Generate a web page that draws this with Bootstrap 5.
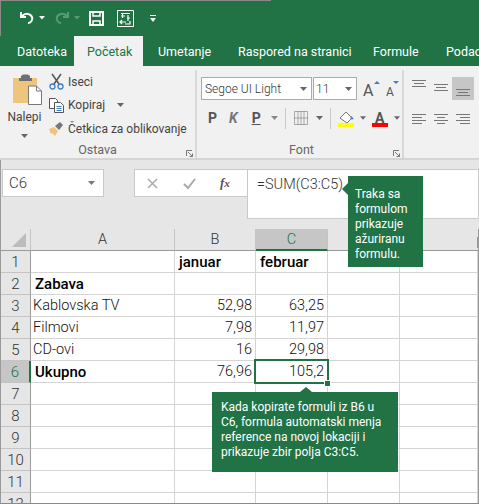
<!DOCTYPE html>
<html lang="sr">
<head>
<meta charset="utf-8">
<title>Excel</title>
<link href="https://cdn.jsdelivr.net/npm/bootstrap@5.3.0/dist/css/bootstrap.min.css" rel="stylesheet">
<style>
html,body{margin:0;height:504px;overflow:hidden;background:#e6e6e6}
body{font-family:Roboto,"Open Sans",sans-serif;color:#333}
.app{width:479px;height:504px;overflow:hidden}
.app svg{overflow:visible}
.titlebar{height:36px;background:linear-gradient(#8a8a8a,#8a8a8a) 0 0/270px 1px no-repeat,#217346;border-left:1px solid #8a8a8a;padding-left:18px}
.titlebar svg{display:block;flex:none}
.tabs{height:30px;background:#217346;font-size:12.5px;color:#fff}
.tabx{height:30px;padding-top:7px;white-space:nowrap;flex:none}
.tabx.on{background:#f1f1f1;color:#217346}
.ribbon{height:94px;background:#f1f1f1;border-bottom:2px solid #d4d4d4;font-size:12px;color:#444}
.grp{height:88px;margin-top:4px;border-right:2px solid #d8d8d8;position:relative;flex:none}
.grpbody{height:72px}
.grplabel{height:16px;line-height:16px;text-align:center;color:#666;font-size:12.5px}
.launch{position:absolute;right:2px;bottom:1px}
.pastecol{width:49px;padding-top:4px}
.pastecol svg:first-child{margin-left:5px}
.mini{height:23.5px;gap:4px;white-space:nowrap}
.selbox{height:23px;background:#fff;border:1px solid #ababab;font-size:12px;padding-left:3px;flex:none;font-weight:300;color:#333}
.alignc{width:22px;height:23px;flex:none}
.alignc.on{background:#c6c6c6}
.formula{height:69px;background:#e6e6e6;padding:9px 0 0 1px;border-left:1px solid #9a9a9a}
.namebox{width:102px;height:28px;background:#fff;border:1px solid #c9c9c9;padding-left:6px;font-size:15px;font-weight:300}
.fxbox{width:113px;height:28px;background:#fff;border:1px solid #c9c9c9;margin-left:30px;border-right:0}
.fbar{flex:1;height:50px;background:#fff;border:1px solid #c9c9c9;padding:4px 0 0 9px;font-size:14.5px;font-weight:300}
.sheet{display:grid;grid-template-columns:30px 144px 81px 72px 72px 78px;grid-auto-rows:22px;background:#fff;height:275px;overflow:hidden;border-left:1px solid #9a9a9a;border-right:1px solid #9a9a9a;border-bottom:1px solid #8a8a8a;font-size:14.5px;font-weight:300;color:#111}
.cell{border-right:1px solid #d4d4d4;border-bottom:1px solid #d4d4d4;padding:0 3px 0 2px;line-height:22px;white-space:nowrap;overflow:hidden}
.num{text-align:right}
.bd{font-weight:500;color:#000;font-size:15px;padding-left:4px}
.hd{background:#e6e6e6;border-right:1px solid #c4c4c4;border-bottom:1px solid #9a9a9a;text-align:center;color:#333;padding:0;position:relative}
.rh{border-right:1px solid #9a9a9a;border-bottom:1px solid #c4c4c4;font-size:15px}
.hd.act{background:#c6c6c6;color:#217346}
.colact{border-bottom:2px solid #217346}
.rowact{border-right:2px solid #217346}
.hdnone{border-right:0}
.sliver{position:absolute;right:0;top:8px;width:1px;height:11px;background:#c98a5a}
.selcell{position:absolute;left:254px;top:359px;width:75px;height:25px;border:2px solid #217346}
.handle{position:absolute;left:325px;top:381px;width:5px;height:5px;background:#217346;outline:1px solid #fff}
.note{position:absolute;background:#217346;color:#fff;font-size:12px;line-height:15px}
.note::before{content:"";position:absolute;width:0;height:0;border:6px solid transparent}
.note1{left:348px;top:176px;width:75px;height:91px;padding:11px 0 0 7px}
.note1::before{left:-6px;top:7px;border-left:0;border-right-color:#217346}
.note2{left:212px;top:392px;width:186px;height:80px;padding:8px 0 0 9px}
.note2::before{left:88px;top:-5px;border-top:0;border-bottom-width:5px;border-bottom-color:#217346}
</style>
</head>
<body>
<div class="app position-relative">
  <div class="titlebar d-flex align-items-center">
    <svg width="16" height="15" viewBox="0 0 16 15" fill="none" stroke="#fff" stroke-width="2"><path d="M2 1v5h5M2.600 5.500C5 3 8 2 10.500 3.500c3 1.500 3.500 4.500 2 6.500-1 1.500-2 2-3.500 2.300"/></svg>
    <svg style="margin-left:4px" width="6" height="4" viewBox="0 0 6 4" fill="#fff"><path d="M0 0h6L3 3.500z"/></svg>
    <svg style="margin-left:9px" width="16" height="15" viewBox="0 0 16 15" fill="none" stroke="#5b9a78" stroke-width="2"><path d="M14 1v5H9M13.400 5.500C11 3 8 2 5.500 3.500c-3 1.500-3.500 4.500-2 6.500 1 1.500 2 2 3.500 2.300"/></svg>
    <svg style="margin-left:4px" width="6" height="4" viewBox="0 0 6 4" fill="#5b9a78"><path d="M0 0h6L3 3.500z"/></svg>
    <svg style="margin-left:9px" width="15" height="15" viewBox="0 0 15 15" fill="none" stroke="#fff" stroke-width="2"><path d="M1 1h13v13H1z"/><path d="M4 1v4h7V1M4 14v-4h7v4" stroke-width="1.500"/></svg>
    <svg style="margin-left:13px" width="17" height="17" viewBox="0 0 17 17" fill="none" stroke="#fff"><path d="M.5.500h16v16H.5z"/><path d="M4 3.500h9M5.500 3v5M4 6h4M11 5v6M13 8H10M3 12h6M5 10l-2 2 2 2M13 11v3H8" stroke-width="1.200"/></svg>
    <svg style="margin-left:16px" width="6" height="7" viewBox="0 0 6 7" fill="#fff"><path d="M0 0h6v1H0zM0 3h6L3 7z"/></svg>
  </div>
  <div class="tabs d-flex">
    <div class="tabx" style="width:74px;padding-left:17px">Datoteka</div>
    <div class="tabx on" style="width:69px;padding-left:13px">Početak</div>
    <div class="tabx" style="width:95px;padding-left:15px">Umetanje</div>
    <div class="tabx" style="width:135px">Raspored na stranici</div>
    <div class="tabx" style="width:73px">Formule</div>
    <div class="tabx">Podaci</div>
  </div>
  <div class="ribbon d-flex">
    <div class="grp d-flex flex-column" style="width:197px">
      <div class="grpbody d-flex">
        <div class="pastecol d-flex flex-column align-items-center">
          <svg width="29" height="31" viewBox="0 -1 29 31"><path d="M0 3h24v25H0z" fill="#eec57d"/><path d="M8 3V0.500h1l1-1h5l1 1h1V3h2v3H6V3z" fill="#6f6f6f"/><path d="M15.500 11h8l5 5v13.500h-13z" fill="#fff" stroke="#777"/><path d="M23.500 11v5h5" fill="none" stroke="#777"/></svg>
          <div style="margin-top:3px">Nalepi</div>
          <svg class="mt-2" width="7" height="4" viewBox="0 0 7 4" fill="#666"><path d="M0 0h7L3.500 4z"/></svg>
        </div>
        <div class="d-flex flex-column">
          <div class="mini d-flex align-items-center">
            <svg width="15" height="16" viewBox="0 0 15 16" fill="none"><path d="M3 0l7 10M12 0L5 10" stroke="#555" stroke-width="1.500"/><circle cx="3.500" cy="12.500" r="2.500" stroke="#3f7fc1" stroke-width="1.300"/><circle cx="11.500" cy="12.500" r="2.500" stroke="#3f7fc1" stroke-width="1.300"/></svg>Iseci
          </div>
          <div class="mini d-flex align-items-center">
            <svg width="15" height="15" viewBox="0 0 15 15" fill="#fff" stroke="#555"><path d="M.5.500h6l2 2v8h-8z"/><path d="M5.500 4.500h6l3 3v7h-9z"/><path d="M7.500 8.500h5M7.500 10.500h5M7.500 12.500h5" stroke="#3f7fc1"/></svg>Kopiraj
            <svg class="ms-2" width="7" height="4" viewBox="0 0 7 4" fill="#666"><path d="M0 0h7L3.500 4z"/></svg>
          </div>
          <div class="mini d-flex align-items-center">
            <svg width="15" height="15" viewBox="0 0 15 15"><path d="M0 8l5-2 4 4-3 5-3-3-1 1-1-2z" fill="#eec57d"/><path d="M6 5l5-4 3 3-4 5z" fill="#777"/></svg>Četkica za oblikovanje
          </div>
        </div>
      </div>
      <div class="grplabel">Ostava</div>
      <svg class="launch" width="7" height="7" viewBox="0 0 7 7" fill="none" stroke="#777"><path d="M.5 6V.500H6M2 2l4.500 4.500M6.500 3.500v3h-3"/></svg>
    </div>
    <div class="grp d-flex flex-column" style="width:207px;padding-left:4px">
      <div class="grpbody">
        <div class="d-flex align-items-center" style="margin-top:7px">
          <div class="selbox d-flex align-items-center justify-content-between" style="width:111px">Segoe UI Light<svg class="me-1" width="7" height="4" viewBox="0 0 7 4" fill="#666"><path d="M0 0h7L3.500 4z"/></svg></div>
          <div class="selbox d-flex align-items-center justify-content-between" style="width:44px;margin-left:1px;padding-left:2px">11<svg class="me-1" width="7" height="4" viewBox="0 0 7 4" fill="#666"><path d="M0 0h7L3.500 4z"/></svg></div>
          <svg style="margin-left:5px" width="19" height="18" viewBox="0 0 19 18"><text x="1" y="16" font-family="Roboto" font-size="16" fill="#555">A</text><path d="M12 4h6l-3-3z" fill="#3f7fc1"/></svg>
          <svg style="margin-left:3px" width="20" height="18" viewBox="0 0 20 18"><text x="2" y="16" font-family="Roboto" font-size="12" fill="#555">A</text><path d="M9 1h6l-3 3z" fill="#3f7fc1"/></svg>
        </div>
        <div class="d-flex align-items-center" style="margin-top:5px;height:26px">
          <span class="fw-bold" style="margin-left:7px;font-size:14px;color:#555">P</span>
          <span class="fw-bold fst-italic" style="margin-left:12px;font-size:14px;color:#777">K</span>
          <span class="fw-bold text-decoration-underline" style="margin-left:14px;font-size:14px;color:#555">P</span>
          <svg style="margin-left:10px" width="7" height="4" viewBox="0 0 7 4" fill="#888"><path d="M0 0h7L3.500 4z"/></svg>
          <span style="width:1px;height:21px;background:#c8c8c8;margin:0 8px 0 7px"></span>
          <svg width="14" height="14" viewBox="0 0 14 14" fill="none" stroke="#666" stroke-dasharray="1 1"><path d="M.5.500h13v13H.5zM.5 7h13M7 .5v13M4 .5v13M10 .5v13"/></svg>
          <svg class="ms-2" width="7" height="4" viewBox="0 0 7 4" fill="#666"><path d="M0 0h7L3.500 4z"/></svg>
          <span style="width:1px;height:21px;background:#c8c8c8;margin:0 7px"></span>
          <svg width="16" height="17" viewBox="0 0 16 17"><path d="M2 8l6-6 6 6-5 5z" fill="#fff" stroke="#777"/><path d="M13 6c1 1 2.500 2 2.500 3-2 1-3 0-3-1z" fill="#3f7fc1"/><path d="M0 13h16v4H0z" fill="#ff0"/></svg>
          <svg style="margin-left:6px" width="6" height="4" viewBox="0 0 7 4" fill="#666"><path d="M0 0h7L3.500 4z"/></svg>
          <svg style="margin-left:6px" width="16" height="17" viewBox="0 0 16 17"><text x="3" y="12.500" font-family="Roboto" font-weight="700" font-size="14" fill="#555">A</text><path d="M0 13h16v4H0z" fill="#f00"/></svg>
          <svg style="margin-left:6px" width="6" height="4" viewBox="0 0 7 4" fill="#666"><path d="M0 0h7L3.500 4z"/></svg>
        </div>
      </div>
      <div class="grplabel">Font</div>
      <svg class="launch" width="7" height="7" viewBox="0 0 7 7" fill="none" stroke="#777"><path d="M.5 6V.500H6M2 2l4.500 4.500M6.500 3.500v3h-3"/></svg>
    </div>
    <div class="flex-fill d-flex flex-column" style="padding:7px 0 0 4px;margin-top:4px">
      <div class="d-flex">
        <div class="alignc"><svg width="22" height="23" fill="none" stroke="#777"><path d="M4 3.500h14M6 6.500h10M4 9.500h14" stroke-width="1.200"/></svg></div>
        <div class="alignc"><svg width="22" height="23" fill="none" stroke="#777"><path d="M4 7.500h14M6 10.500h10M4 13.500h14" stroke-width="1.200"/></svg></div>
        <div class="alignc on"><svg width="22" height="23" fill="none" stroke="#777"><path d="M4 12.500h14M6 15.500h10M4 18.500h14" stroke-width="1.200"/></svg></div>
      </div>
      <div class="d-flex" style="margin-top:9px">
        <div class="alignc"><svg width="22" height="23" fill="none" stroke="#777"><path d="M4 5.500h14M4 8.500h10M4 11.500h14M4 14.500h10" stroke-width="1.200"/></svg></div>
        <div class="alignc"><svg width="22" height="23" fill="none" stroke="#777"><path d="M4 5.500h14M7 8.500h8M4 11.500h14M7 14.500h8" stroke-width="1.200"/></svg></div>
        <div class="alignc"><svg width="22" height="23" fill="none" stroke="#777"><path d="M4 5.500h14M8 8.500h10M4 11.500h14M8 14.500h10" stroke-width="1.200"/></svg></div>
      </div>
    </div>
  </div>
  <div class="formula d-flex align-items-start">
    <div class="namebox d-flex align-items-center justify-content-between">C6<svg class="me-2" width="7" height="4" viewBox="0 0 7 4" fill="#777"><path d="M0 0h7L3.500 4z"/></svg></div>
    <div class="fxbox d-flex align-items-center">
      <svg style="margin-left:12px" width="12" height="11" viewBox="0 0 12 11" fill="none" stroke="#aaa" stroke-width="1.500"><path d="M1 1l9 9M10 1l-9 9"/></svg>
      <svg style="margin-left:24px" width="13" height="11" viewBox="0 0 13 11" fill="none" stroke="#aaa" stroke-width="2"><path d="M1 6l4 4 7-9"/></svg>
      <span class="fst-italic fw-bold" style="margin-left:24px;font-family:'Liberation Serif',serif;font-size:13px;color:#555">f<small>x</small></span>
    </div>
    <div class="fbar">=SUM(C3:C5)</div>
  </div>
  <div class="sheet">
    <div class="cell hd"><svg class="position-absolute end-0 bottom-0" width="16" height="16" style="margin:0 3px 2px 0" fill="#bcbcbc"><path d="M15 1v14H1z"/></svg></div><div class="cell hd">A</div><div class="cell hd">B</div><div class="cell hd act colact">C</div><div class="cell hd hdnone"></div><div class="cell hd hdnone"><span class="sliver"></span></div>
    <div class="cell hd rh">1</div><div class="cell"></div><div class="cell bd">januar</div><div class="cell bd">februar</div><div class="cell"></div><div class="cell"></div>
    <div class="cell hd rh">2</div><div class="cell bd">Zabava</div><div class="cell"></div><div class="cell"></div><div class="cell"></div><div class="cell"></div>
    <div class="cell hd rh">3</div><div class="cell">Kablovska TV</div><div class="cell num">52,98</div><div class="cell num">63,25</div><div class="cell"></div><div class="cell"></div>
    <div class="cell hd rh">4</div><div class="cell">Filmovi</div><div class="cell num">7,98</div><div class="cell num">11,97</div><div class="cell"></div><div class="cell"></div>
    <div class="cell hd rh">5</div><div class="cell">CD-ovi</div><div class="cell num">16</div><div class="cell num">29,98</div><div class="cell"></div><div class="cell"></div>
    <div class="cell hd rh act rowact">6</div><div class="cell bd">Ukupno</div><div class="cell num">76,96</div><div class="cell num">105,2</div><div class="cell"></div><div class="cell"></div>
    <div class="cell hd rh">7</div><div class="cell"></div><div class="cell"></div><div class="cell"></div><div class="cell"></div><div class="cell"></div>
    <div class="cell hd rh">8</div><div class="cell"></div><div class="cell"></div><div class="cell"></div><div class="cell"></div><div class="cell"></div>
    <div class="cell hd rh">9</div><div class="cell"></div><div class="cell"></div><div class="cell"></div><div class="cell"></div><div class="cell"></div>
    <div class="cell hd rh">10</div><div class="cell"></div><div class="cell"></div><div class="cell"></div><div class="cell"></div><div class="cell"></div>
    <div class="cell hd rh">11</div><div class="cell"></div><div class="cell"></div><div class="cell"></div><div class="cell"></div><div class="cell"></div>
    <div class="cell hd rh">12</div><div class="cell"></div><div class="cell"></div><div class="cell"></div><div class="cell"></div><div class="cell"></div>
  </div>
  <div class="selcell"></div>
  <div class="handle"></div>
  <div class="note note1">Traka sa<br>formulom<br>prikazuje<br>ažuriranu<br>formulu.</div>
  <div class="note note2">Kada kopirate formuli iz B6 u<br>C6, formula automatski menja<br>reference na novoj lokaciji i<br>prikazuje zbir polja C3:C5.</div>
</div>
<script src="https://cdn.jsdelivr.net/npm/bootstrap@5.3.0/dist/js/bootstrap.bundle.min.js"></script>
</body>
</html>
